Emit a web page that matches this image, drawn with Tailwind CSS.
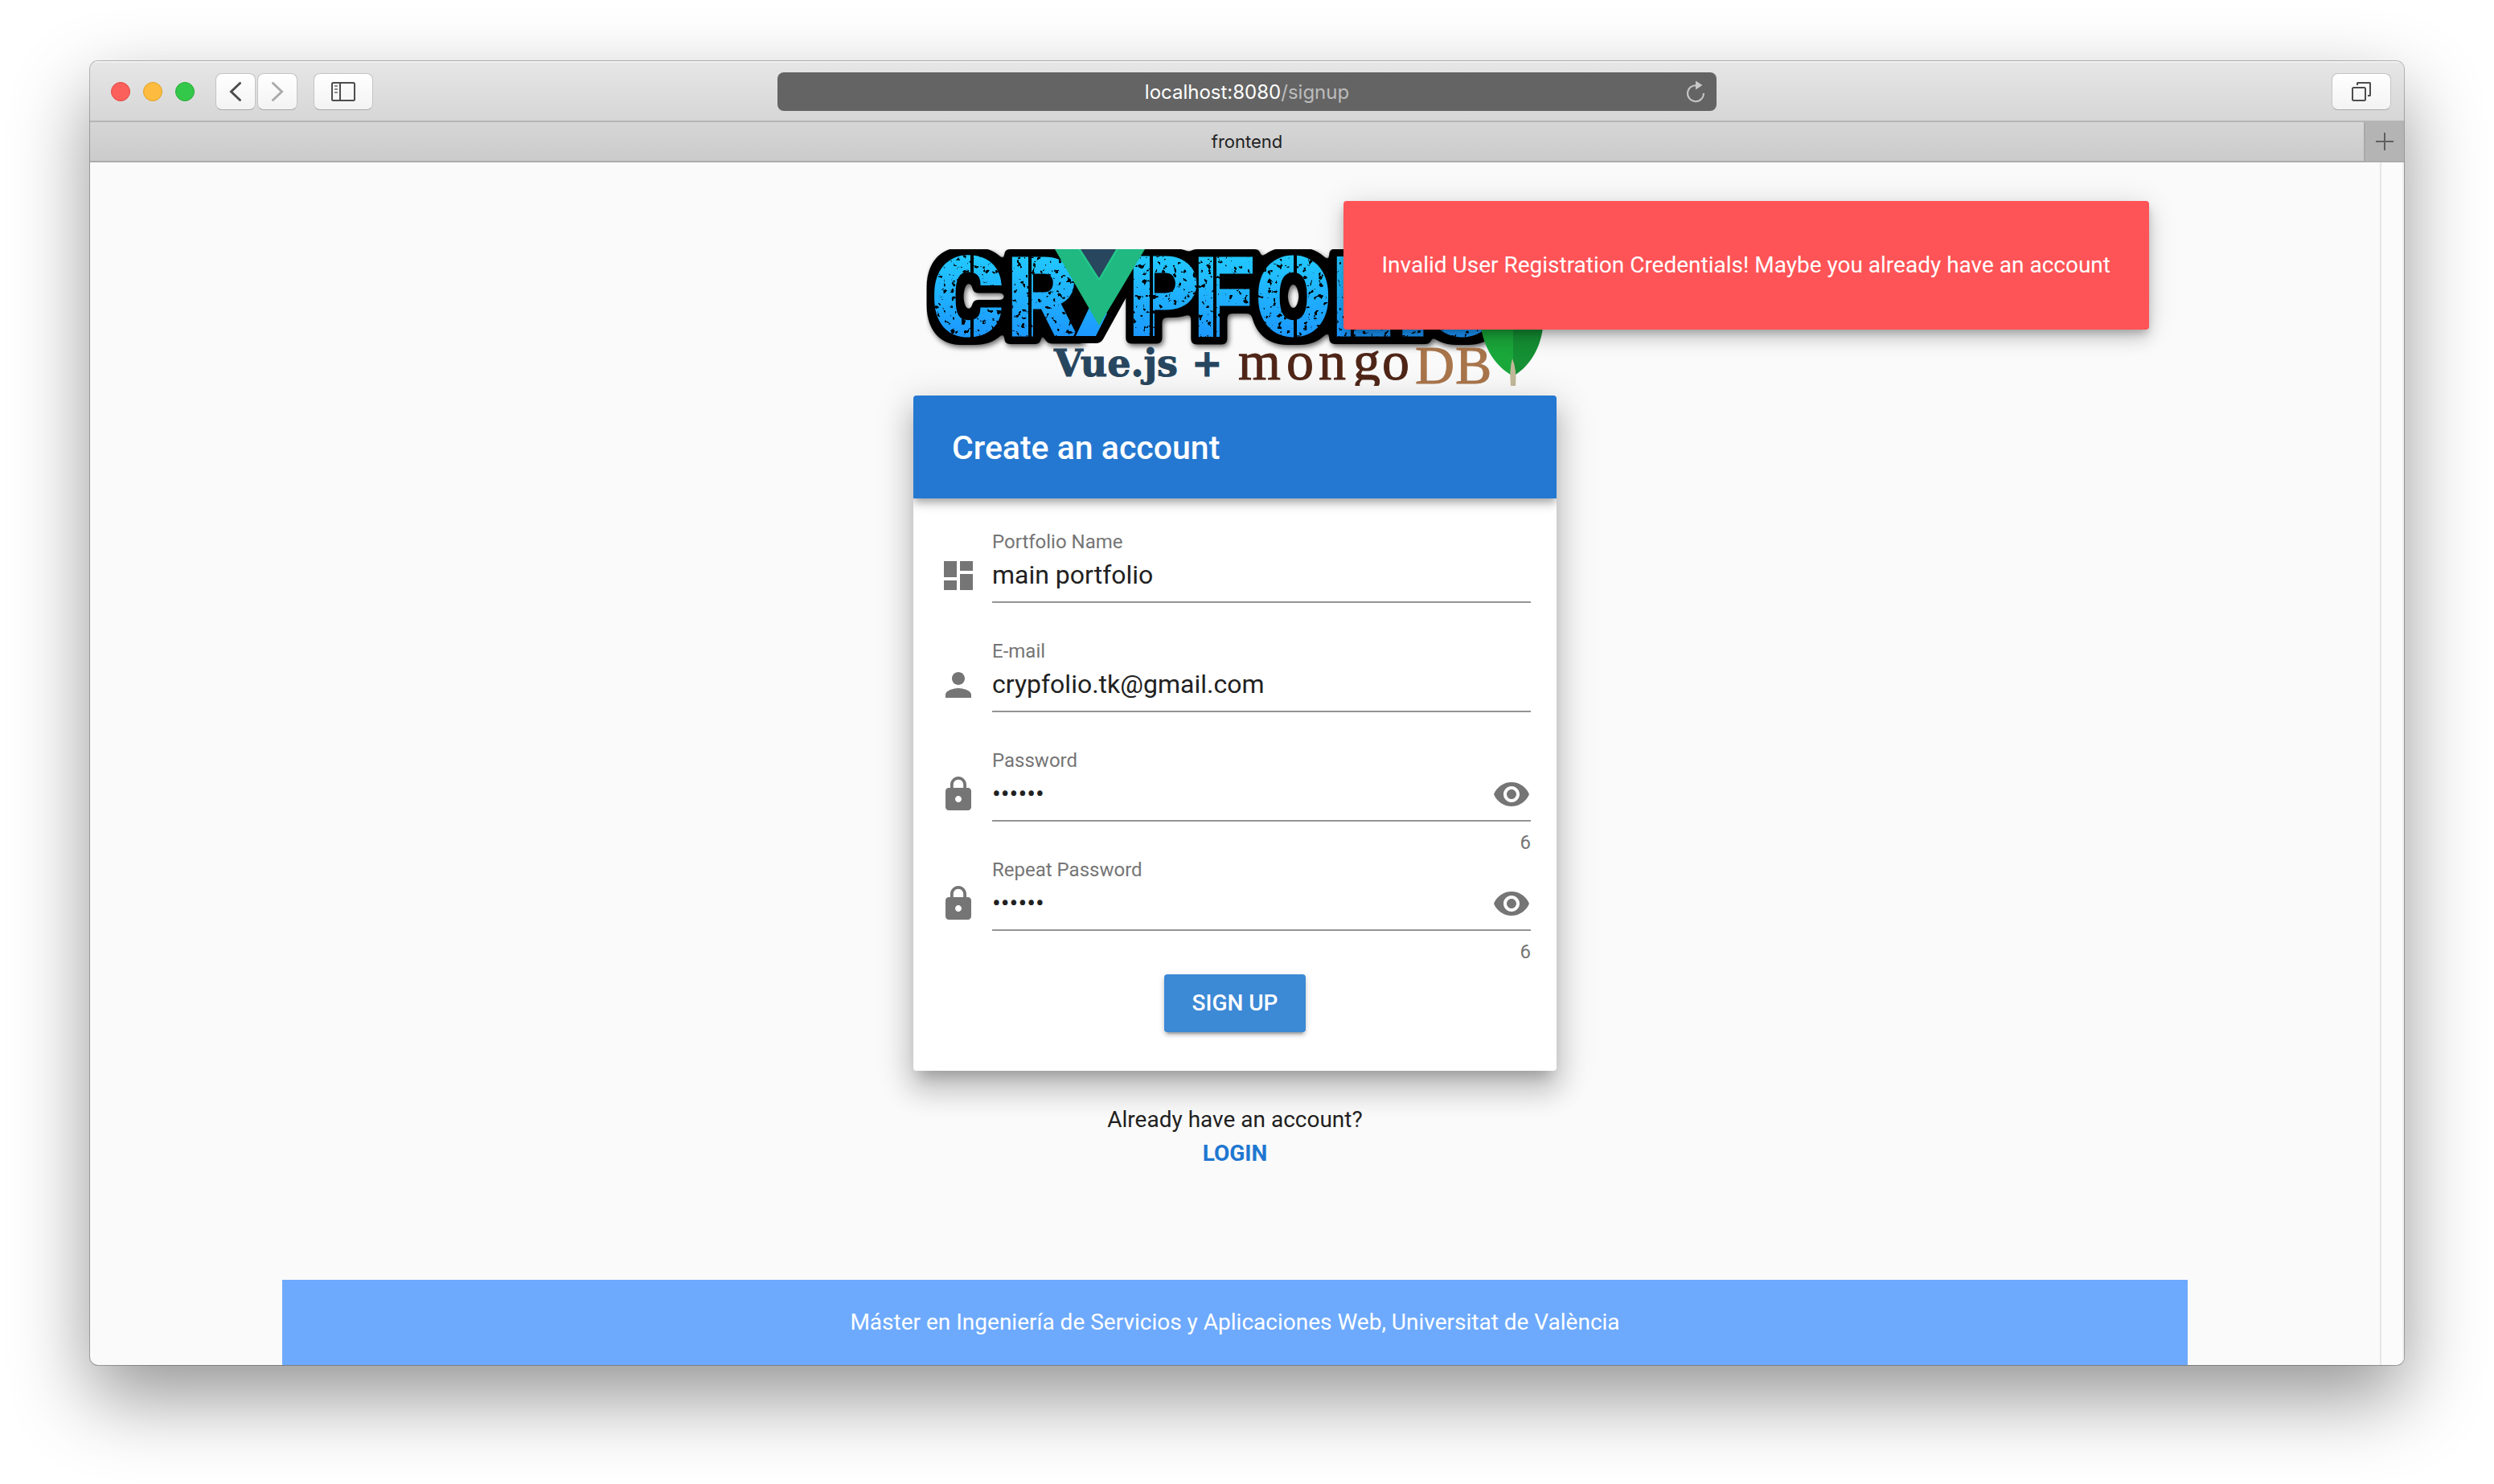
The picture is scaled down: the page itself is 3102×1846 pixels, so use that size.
<!DOCTYPE html>
<html lang="en">
<head>
<meta charset="utf-8">
<title>frontend</title>
<script src="https://cdn.jsdelivr.net/npm/@tailwindcss/browser@4"></script>
</head>
<body class="bg-white font-['Roboto',sans-serif] text-[#212121]">
<div class="flex min-h-screen flex-col px-[112px] pt-[76px] pb-[148px]">
  <div class="flex flex-1 flex-col overflow-hidden rounded-[10px] bg-[#fafafa] shadow-[0_0_0_1px_rgba(0,0,0,0.26),0_40px_96px_rgba(0,0,0,0.42)]">

    <!-- Browser toolbar -->
    <header class="grid h-[76px] grid-cols-[1fr_minmax(0,1168px)_1fr] items-center border-t-2 border-b-2 border-t-[#f1f1f1] border-b-[#b5b5b5] bg-linear-to-b from-[#e6e6e6] to-[#d6d6d6]">
      <div class="flex items-center pl-[26px]">
        <div class="flex gap-4">
          <button aria-label="Close" class="size-6 rounded-full border border-[#e2463f] bg-[#fc605b]"></button>
          <button aria-label="Minimize" class="size-6 rounded-full border border-[#dfa023] bg-[#fdbc40]"></button>
          <button aria-label="Zoom" class="size-6 rounded-full border border-[#27aa35] bg-[#34c84a]"></button>
        </div>
        <div class="ml-[26px] flex gap-[2px]">
          <button aria-label="Back" class="flex h-[46px] w-[50px] items-center justify-center rounded-lg border border-[#c4c4c4] border-b-[#a9a9a9] bg-linear-to-b from-white to-[#f3f3f3]">
            <svg class="h-6 w-4" viewBox="0 0 16 24" fill="none" stroke="#4d4d4d" stroke-width="3" stroke-linecap="round"><path d="M13.500 1.500 2.500 12l11 10.500"/></svg>
          </button>
          <button aria-label="Forward" class="flex h-[46px] w-[50px] items-center justify-center rounded-lg border border-[#c4c4c4] border-b-[#a9a9a9] bg-linear-to-b from-white to-[#f3f3f3]">
            <svg class="h-6 w-4" viewBox="0 0 16 24" fill="none" stroke="#ababab" stroke-width="3" stroke-linecap="round"><path d="M2.500 1.500 13.500 12l-11 10.500"/></svg>
          </button>
        </div>
        <button aria-label="Show sidebar" class="ml-5 flex h-[46px] w-[74px] items-center justify-center rounded-lg border border-[#c4c4c4] border-b-[#a9a9a9] bg-linear-to-b from-white to-[#f3f3f3]">
          <svg class="h-6 w-[30px]" viewBox="0 0 30 24" fill="none" stroke="#4d4d4d" stroke-width="2"><rect x="1" y="1" width="28" height="22" rx="1.500"/><path d="M11 1v22"/><path stroke="#8a8a8a" d="M4 5h4M4 9h4M4 13h4"/></svg>
        </button>
      </div>
      <div class="grid h-12 grid-cols-[52px_1fr_52px] items-center rounded-lg bg-[#646464] font-['Inter',sans-serif] text-[24px] leading-[30px]">
        <span></span>
        <p class="pt-[2px] text-center text-white">localhost:8080<span class="text-[#bcbcbc]">/signup</span></p>
        <button aria-label="Reload" class="flex justify-center">
          <svg class="h-7 w-6" viewBox="0 0 24 28"><path d="M13 6.200A10 10 0 1 0 22 16" fill="none" stroke="#c8c8c8" stroke-width="2"/><path d="M12 .5 20.500 6 12 11.500z" fill="#c8c8c8"/></svg>
        </button>
      </div>
      <div class="flex justify-end pr-4">
        <button aria-label="Show all tabs" class="flex h-[46px] w-[74px] items-center justify-center rounded-lg border border-[#c4c4c4] border-b-[#a9a9a9] bg-linear-to-b from-white to-[#f3f3f3]">
          <svg class="size-6" viewBox="0 0 24 24" fill="none" stroke="#4d4d4d" stroke-width="2"><rect x="1" y="7" width="16" height="16" rx="1.500"/><path d="M7 4V1.500L7.500 1h15l.5.500v15l-.5.500H20"/></svg>
        </button>
      </div>
    </header>

    <!-- Tab bar -->
    <div class="flex h-[50px] border-b-2 border-[#acacac] bg-linear-to-b from-[#d6d6d6] to-[#cbcbcb] font-['Inter',sans-serif] text-[22px] leading-[48px]">
      <div class="flex-1 pl-[50px] text-center text-[#222]">frontend</div>
      <button aria-label="New tab" class="flex w-[50px] items-center justify-center border-l-2 border-[#a8a8a8] bg-[#b4b4b4]">
        <svg class="size-[22px]" viewBox="0 0 22 22" stroke="#5f5f5f" stroke-width="2"><path d="M11 0v22M0 11h22"/></svg>
      </button>
    </div>

    <!-- Page -->
    <div class="relative flex flex-1">
      <div class="flex flex-1 flex-col border-r-2 border-[#e6e6e6]">
        <main class="flex flex-col items-center pt-[108px]">
          <svg class="h-[170px] w-[768px]" viewBox="0 0 768 170" role="img" aria-label="Crypfolio, Vue.js + mongoDB">
            <defs>
              <linearGradient id="sky" gradientUnits="userSpaceOnUse" x1="0" y1="10" x2="0" y2="108">
                <stop offset="0" stop-color="#22c8ff"/><stop offset="1" stop-color="#1c98ff"/>
              </linearGradient>
              <!-- Black outline and shadow behind the letters, worn specks over them -->
              <filter id="worn" filterUnits="userSpaceOnUse" x="-20" y="-20" width="808" height="200" color-interpolation-filters="sRGB">
                <feMorphology in="SourceAlpha" operator="dilate" radius="9" result="wide"/>
                <feGaussianBlur in="wide" stdDeviation="3" result="round"/>
                <feColorMatrix in="round" type="matrix" values="0 0 0 0 0  0 0 0 0 0  0 0 0 0 0  0 0 0 8 -3" result="edge"/>
                <feDropShadow in="edge" dx="2" dy="3" stdDeviation="3" flood-color="#000" flood-opacity="0.6" result="base"/>
                <feTurbulence type="fractalNoise" baseFrequency="0.16" numOctaves="3" seed="8" result="n"/>
                <feColorMatrix in="n" type="matrix" values="0 0 0 0 0  0 0 0 0 0  0 0 0 0 0  16 0 0 0 -10.200" result="specks"/>
                <feComposite in="specks" in2="SourceGraphic" operator="in" result="cut"/>
                <feMerge><feMergeNode in="base"/><feMergeNode in="SourceGraphic"/><feMergeNode in="cut"/></feMerge>
              </filter>
            </defs>
            <path fill="#000" d="M150 0h132L220 112q-3 5-9 5h-46q-8-1-4-10l22-32z"/>
            <text x="7 101 252 333 410 505 585 620" y="107" font-family="Roboto, sans-serif" font-weight="900" font-size="135" fill="url(#sky)" stroke="url(#sky)" stroke-width="3" filter="url(#worn)">CRPFOLIO</text>
            <path fill="#000" d="M55 6h4v26h-4zM55 80h4v34h-4zM127 8h4v102h-4zM278 8h4v102h-4zM357 8h4v102h-4zM457 6h4v28h-4zM457 82h4v32h-4zM528 8h4v102h-4z"/>
            <path fill="#000" d="M206 66 182 110h32l38-70z"/>
            <path fill="url(#sky)" d="m205 68-19 40h25l14-28z"/>
            <path fill="#1fb981" d="M160 0h112l-57 95z"/>
            <path fill="#25c98d" d="M189 0h50l-24 40z"/>
            <path fill="#28465e" d="M192 0h44l-21 36z"/>
            <path fill="#1ba83b" d="M690 98C688 62 704 34 730 8v150C712 148 696 130 690 98z"/>
            <path fill="#159034" d="M730 8c26 26 39 52 37 90-4 30-20 50-37 60z"/>
            <path fill="#c2b89a" d="M729 136q6 14 4 34h-6q-2-20 2-34z"/>
            <g font-family="'DejaVu Serif', serif" font-weight="700" font-size="46" fill="#27465f" stroke="#27465f">
              <text x="159" y="158">Vue.js</text><text x="330" y="158">+</text>
            </g>
            <g font-family="'Liberation Serif', serif" font-size="68">
              <text x="388 448 488 531 567" y="162" fill="#4f2517" stroke="#4f2517">mongo</text>
              <text x="608 658" y="167" fill="#a9754b" stroke="#a9754b">DB</text>
            </g>
          </svg>

          <section class="mt-3 w-[800px] overflow-hidden rounded-[4px] bg-white shadow-[0_14px_16px_-8px_rgba(0,0,0,0.2),0_24px_34px_4px_rgba(0,0,0,0.14),0_10px_44px_8px_rgba(0,0,0,0.12)]">
            <h1 class="flex h-32 items-center bg-[#2478d1] px-12 pt-[2px] text-[41px] leading-[48px] font-medium text-white shadow-[0_4px_8px_-2px_rgba(0,0,0,0.2),0_8px_10px_rgba(0,0,0,0.14),0_2px_20px_rgba(0,0,0,0.12)]">Create an account</h1>
            <form class="flex flex-col px-8 pt-[42px] pb-12">
              <div class="grid h-[136px] grid-cols-[48px_1fr] content-start gap-x-[18px]">
                <label for="portfolio" class="col-start-2 mb-[6px] text-[24px] leading-6 text-[#757575]">Portfolio Name</label>
                <svg class="size-12 fill-[#757575]" viewBox="0 0 24 24"><path d="M3 13h8V3H3v10zm0 8h8v-6H3v6zm10 0h8V11h-8v10zm0-18v6h8V3h-8z"/></svg>
                <div class="flex h-[58px] items-start border-b-2 border-[#949494]"><input id="portfolio" type="text" value="main portfolio" class="h-[46px] min-w-0 flex-1 text-[32px] leading-10 outline-none"></div>
              </div>
              <div class="grid h-[136px] grid-cols-[48px_1fr] content-start gap-x-[18px]">
                <label for="email" class="col-start-2 mb-[6px] text-[24px] leading-6 text-[#757575]">E-mail</label>
                <svg class="size-12 fill-[#757575]" viewBox="0 0 24 24"><path d="M12 12c2.210 0 4-1.790 4-4s-1.790-4-4-4-4 1.790-4 4 1.790 4 4 4zm0 2c-2.670 0-8 1.340-8 4v2h16v-2c0-2.660-5.330-4-8-4z"/></svg>
                <div class="flex h-[58px] items-start border-b-2 border-[#949494]"><input id="email" type="email" value="crypfolio.tk@gmail.com" class="h-[46px] min-w-0 flex-1 text-[32px] leading-10 outline-none"></div>
              </div>
              <div class="grid h-[136px] grid-cols-[48px_1fr] content-start gap-x-[18px]">
                <label for="password" class="col-start-2 mb-[6px] text-[24px] leading-6 text-[#757575]">Password</label>
                <svg class="size-12 fill-[#757575]" viewBox="0 0 24 24"><path d="M18 8h-1V6c0-2.760-2.240-5-5-5S7 3.240 7 6v2H6c-1.100 0-2 .9-2 2v10c0 1.100.9 2 2 2h12c1.100 0 2-.9 2-2V10c0-1.100-.9-2-2-2zm-6 9c-1.100 0-2-.9-2-2s.9-2 2-2 2 .9 2 2-.9 2-2 2zm3.100-9H8.900V6c0-1.710 1.390-3.100 3.100-3.100 1.710 0 3.100 1.390 3.100 3.100v2z"/></svg>
                <div class="flex h-[58px] items-start border-b-2 border-[#949494]"><input id="password" type="password" value="secret" class="h-[46px] min-w-0 flex-1 text-[32px] leading-10 outline-none">
                  <button type="button" aria-label="Show password"><svg class="size-12 fill-[#757575]" viewBox="0 0 24 24"><path d="M12 4.500C7 4.500 2.730 7.610 1 12c1.730 4.390 6 7.500 11 7.500s9.270-3.110 11-7.500c-1.730-4.390-6-7.500-11-7.500zM12 17c-2.760 0-5-2.240-5-5s2.240-5 5-5 5 2.240 5 5-2.240 5-5 5zm0-8c-1.660 0-3 1.340-3 3s1.340 3 3 3 3-1.340 3-3-1.340-3-3-3z"/></svg></button></div>
                <span class="col-start-2 mt-[14px] text-right text-[24px] leading-6 text-[#757575]">6</span>
              </div>
              <div class="grid h-[136px] grid-cols-[48px_1fr] content-start gap-x-[18px]">
                <label for="repeat" class="col-start-2 mb-[6px] text-[24px] leading-6 text-[#757575]">Repeat Password</label>
                <svg class="size-12 fill-[#757575]" viewBox="0 0 24 24"><path d="M18 8h-1V6c0-2.760-2.240-5-5-5S7 3.240 7 6v2H6c-1.100 0-2 .9-2 2v10c0 1.100.9 2 2 2h12c1.100 0 2-.9 2-2V10c0-1.100-.9-2-2-2zm-6 9c-1.100 0-2-.9-2-2s.9-2 2-2 2 .9 2 2-.9 2-2 2zm3.100-9H8.900V6c0-1.710 1.390-3.100 3.100-3.100 1.710 0 3.100 1.390 3.100 3.100v2z"/></svg>
                <div class="flex h-[58px] items-start border-b-2 border-[#949494]"><input id="repeat" type="password" value="secret" class="h-[46px] min-w-0 flex-1 text-[32px] leading-10 outline-none">
                  <button type="button" aria-label="Show repeated password"><svg class="size-12 fill-[#757575]" viewBox="0 0 24 24"><path d="M12 4.500C7 4.500 2.730 7.610 1 12c1.730 4.390 6 7.500 11 7.500s9.270-3.110 11-7.500c-1.730-4.390-6-7.500-11-7.500zM12 17c-2.760 0-5-2.240-5-5s2.240-5 5-5 5 2.240 5 5-2.240 5-5 5zm0-8c-1.660 0-3 1.340-3 3s1.340 3 3 3 3-1.340 3-3-1.340-3-3-3z"/></svg></button></div>
                <span class="col-start-2 mt-[14px] text-right text-[24px] leading-6 text-[#757575]">6</span>
              </div>
              <button type="submit" class="mt-[6px] h-[72px] w-44 self-center rounded-[4px] bg-[#3c89d6] text-[28px] leading-[42px] font-medium text-white shadow-[0_6px_2px_-4px_rgba(0,0,0,0.2),0_4px_4px_rgba(0,0,0,0.14),0_2px_10px_rgba(0,0,0,0.12)]">SIGN UP</button>
            </form>
          </section>

          <p class="mt-10 pb-10 text-center text-[28px] leading-[42px]">Already have an account?<br><a href="#login" class="font-bold text-[#1f77d1]">LOGIN</a></p>
        </main>
        <footer class="mx-auto mt-auto w-full max-w-[2370px] bg-[#6daafd] py-8 text-center text-[28px] leading-[42px] text-white">Máster en Ingeniería de Servicios y Aplicaciones Web, Universitat de València</footer>
      </div>
      <!-- Scrollbar track -->
      <div class="w-7 border-r-2 border-[#f1f1f1] bg-[#fbfbfb]"></div>

      <div role="alert" class="absolute top-12 right-[317px] rounded-[4px] bg-[#ff5457] px-12 py-[59px] text-[28px] leading-[42px] text-white shadow-[0_6px_10px_-2px_rgba(0,0,0,0.2),0_12px_20px_rgba(0,0,0,0.14),0_2px_36px_rgba(0,0,0,0.12)]">Invalid User Registration Credentials! Maybe you already have an account</div>
    </div>
  </div>
</div>
</body>
</html>
